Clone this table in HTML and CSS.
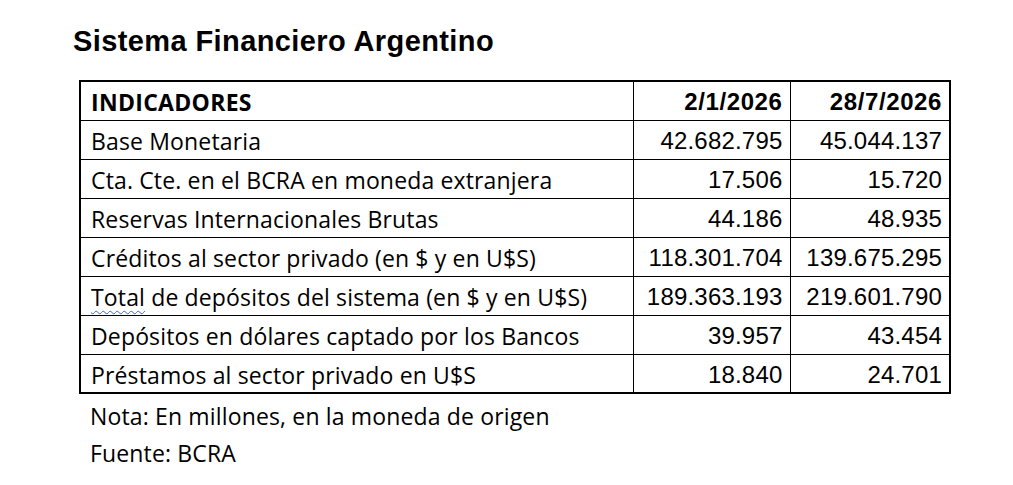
FILE: index.html
```html
<!DOCTYPE html>
<html lang="es">
<head>
<meta charset="utf-8">
<title>Sistema Financiero Argentino</title>
<link rel="stylesheet" href="styles.css">
</head>
<body>
<div class="page">
  <h1 class="title">Sistema Financiero Argentino</h1>
  <table class="grid">
    <colgroup>
      <col class="c-label">
      <col class="c-num1">
      <col class="c-num2">
    </colgroup>
    <thead>
      <tr>
        <th class="label head-label">INDICADORES</th>
        <th class="num head-num">2/1/2026</th>
        <th class="num head-num">28/7/2026</th>
      </tr>
    </thead>
    <tbody>
      <tr><td class="label">Base Monetaria</td><td class="num">42.682.795</td><td class="num">45.044.137</td></tr>
      <tr><td class="label">Cta. Cte. en el BCRA en moneda extranjera</td><td class="num">17.506</td><td class="num">15.720</td></tr>
      <tr><td class="label">Reservas Internacionales Brutas</td><td class="num">44.186</td><td class="num">48.935</td></tr>
      <tr><td class="label">Créditos al sector privado (en $ y en U$S)</td><td class="num">118.301.704</td><td class="num">139.675.295</td></tr>
      <tr><td class="label"><span class="spell">Total</span> de depósitos del sistema (en $ y en U$S)</td><td class="num">189.363.193</td><td class="num">219.601.790</td></tr>
      <tr><td class="label">Depósitos en dólares captado por los Bancos</td><td class="num">39.957</td><td class="num">43.454</td></tr>
      <tr><td class="label">Préstamos al sector privado en U$S</td><td class="num">18.840</td><td class="num">24.701</td></tr>
    </tbody>
  </table>
  <p class="note">Nota: En millones, en la moneda de origen</p>
  <p class="note">Fuente: BCRA</p>
</div>
</body>
</html>
```

FILE: styles.css
```css
html, body {
  margin: 0;
  padding: 0;
  background: #ffffff;
  color: #000000;
}

.page {
  padding: 27px 0 0 0;
}

.title {
  margin: 0 0 25px 73px;
  font-family: "Liberation Sans", Arial, sans-serif;
  font-weight: bold;
  font-size: 29px;
  line-height: 28px;
  letter-spacing: 0.4px;
}

.grid {
  margin-left: 79px;
  width: 870px;
  border-collapse: collapse;
  border: 2.5px solid #000;
  table-layout: fixed;
}

.c-label { width: 553px; }
.c-num1 { width: 157px; }
.c-num2 { width: 160px; }

.grid th,
.grid td {
  border: 1px solid #000;
  height: 39px;
  padding: 3px 7px 0 10px;
  box-sizing: border-box;
  vertical-align: middle;
}

.label {
  text-align: left;
  font-family: "Open Sans", "Noto Sans", sans-serif;
  font-size: 23px;
  font-weight: normal;
  letter-spacing: 0.15px;
  white-space: nowrap;
}

.head-label {
  font-weight: bold;
  font-size: 23px;
  letter-spacing: 0.3px;
}

.num {
  text-align: right;
  font-family: "Liberation Sans", Arial, sans-serif;
  font-size: 24px;
  letter-spacing: 0.2px;
  white-space: nowrap;
}

.grid td.num,
.grid th.num {
  padding-right: 7px;
}

.head-num {
  font-weight: bold;
  font-size: 24px;
  letter-spacing: 0.6px;
}

.spell {
  text-decoration: underline wavy #3b63d6;
  text-decoration-thickness: 1px;
  text-underline-offset: 4px;
}

.note {
  margin: 0 0 0 90px;
  font-family: "Open Sans", "Noto Sans", sans-serif;
  font-size: 23px;
  letter-spacing: 0.15px;
  line-height: 37px;
}

.grid + .note {
  margin-top: 4px;
}
```
